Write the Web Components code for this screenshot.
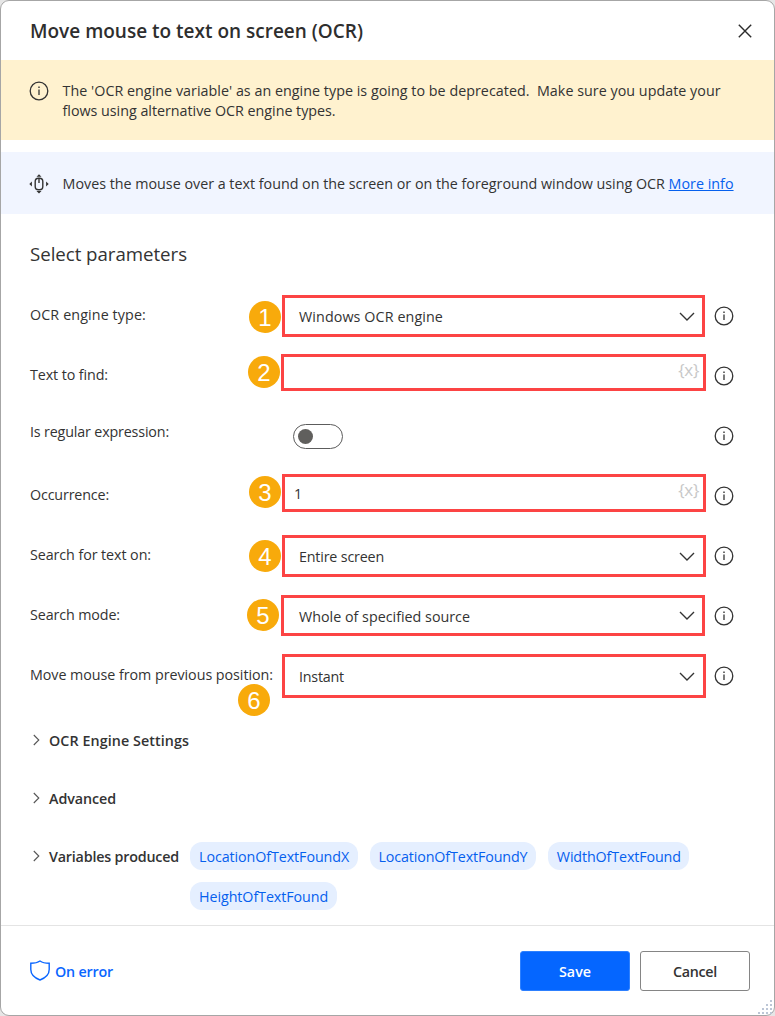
<!DOCTYPE html>
<html lang="en">
<head>
<meta charset="utf-8">
<title>Move mouse to text on screen (OCR)</title>
<style>
html,body{margin:0;height:100%;background:#e6e6e6}
body{font-family:"Open Sans","Noto Sans",sans-serif;font-size:14.3px;color:#333;overflow:hidden}
</style>
</head>
<body>
<action-dialog>
  <ui-text slot="title" w="333">Move mouse to text on screen (OCR)</ui-text>
  <message-bar kind="warning" icon="info">
    <div><ui-text w="658">The 'OCR engine variable' as an engine type is going to be deprecated.&nbsp; Make sure you update your</ui-text></div>
    <div><ui-text w="273">flows using alternative OCR engine types.</ui-text></div>
  </message-bar>
  <message-bar kind="about" icon="mouse"><ui-text w="606">Moves the mouse over a text found on the screen or on the foreground window using OCR&nbsp;</ui-text><ui-text w="65" style="color:#0560ee;text-decoration:underline">More info</ui-text></message-bar>
  <section-title><ui-text w="157">Select parameters</ui-text></section-title>
  <param-row style="--t:10px;--h:42px;--l:0px;--r:1px;--bx:249px;--by:15.500px" kind="select" n="1"><ui-text slot="label" w="116">OCR engine type:</ui-text><ui-text w="144">Windows OCR engine</ui-text></param-row>
  <param-row style="--t:9px;--h:37px;--l:-1px;--r:0px;--bx:248px;--by:10.500px" kind="input" n="2"><ui-text slot="label" w="78">Text to find:</ui-text></param-row>
  <param-row style="--ly:-3px" kind="toggle"><ui-text slot="label" w="139">Is regular expression:</ui-text></param-row>
  <param-row style="--t:9px;--h:38px;--l:0px;--r:0px;--bx:249px;--by:10.500px" kind="input" n="3"><ui-text slot="label" w="79">Occurrence:</ui-text>1</param-row>
  <param-row style="--t:10px;--h:42px;--l:0px;--r:0px;--bx:249px;--by:14.500px" kind="select" n="4"><ui-text slot="label" w="121">Search for text on:</ui-text><ui-text w="85">Entire screen</ui-text></param-row>
  <param-row style="--t:10px;--h:41px;--l:-1px;--r:1px;--bx:247px;--by:13.500px" kind="select" n="5"><ui-text slot="label" w="90">Search mode:</ui-text><ui-text w="171">Whole of specified source</ui-text></param-row>
  <param-row style="--t:9px;--h:44px;--l:0px;--r:0px;--bx:238px;--by:38.500px" kind="select" n="6"><ui-text slot="label" w="243">Move mouse from previous position:</ui-text><ui-text w="45">Instant</ui-text></param-row>
  <expander-row style="margin-top:7px"><ui-text slot="label" w="140">OCR Engine Settings</ui-text></expander-row>
  <expander-row><ui-text slot="label" w="67">Advanced</ui-text></expander-row>
  <expander-row><ui-text slot="label" w="130">Variables produced</ui-text>
    <variable-chip><ui-text w="150">LocationOfTextFoundX</ui-text></variable-chip>
    <variable-chip><ui-text w="149">LocationOfTextFoundY</ui-text></variable-chip>
    <variable-chip><ui-text w="124">WidthOfTextFound</ui-text></variable-chip>
    <variable-chip><ui-text w="129">HeightOfTextFound</ui-text></variable-chip>
  </expander-row>
  <ui-text slot="error" w="58">On error</ui-text>
  <ui-button slot="actions" primary><ui-text w="32">Save</ui-text></ui-button>
  <ui-button slot="actions"><ui-text w="44">Cancel</ui-text></ui-button>
</action-dialog>
<script>
const ICONS = {
  info: `<svg width="20" height="20" viewBox="0 0 20 20" fill="none" stroke="#333" stroke-width="1.3"><circle cx="10" cy="10" r="8.8"/><path d="M10 8.4V14"/><path d="M10 5.6V7" stroke-width="1.4"/></svg>`,
  mouse: `<svg width="20" height="20" viewBox="0 0 20 20" fill="#333"><rect x="6.2" y="4.3" width="7.6" height="11.4" rx="3.2" fill="none" stroke="#333" stroke-width="1.4"/><path d="M9.3 4h1.4v5H9.3zM10 .2l2.500 2.600h-5zM10 19.500l2.500-2.600h-5zM.3 10l2.600-2.400v4.800zM19.700 10l-2.600-2.400v4.800z"/></svg>`,
  close: `<svg width="14" height="14" viewBox="0 0 14 14" fill="none" stroke="#2b2b2b" stroke-width="1.4"><path d="M.8.8l12.4 12.4M13.2.8.8 13.2"/></svg>`,
  down: `<svg width="16" height="10" viewBox="0 0 16 10" fill="none" stroke="#333" stroke-width="1.35"><path d="M1 1l7 7 7-7"/></svg>`,
  right: `<svg width="7" height="12" viewBox="0 0 7 12" fill="none" stroke="#555" stroke-width="1.1"><path d="M.8 1l5 5-5 5"/></svg>`,
  shield: `<svg width="20" height="21" viewBox="0 0 20 21" fill="none" stroke="#0a66ff" stroke-width="1.4"><path d="M10 1C7.6 2.7 4.5 3.3.8 3.3V9.5C.8 14.5 4.8 18 10 20 15.2 18 19.2 14.5 19.2 9.5V3.3C15.5 3.3 12.4 2.7 10 1Z"/></svg>`
};

class Base extends HTMLElement {
  connectedCallback() {
    if (!this.shadowRoot) this.attachShadow({mode: 'open'}).innerHTML = this.render();
  }
}

/* One line of text whose tracking is tuned so that it spans the width in "w". */
customElements.define('ui-text', class extends Base {
  render() { return `<style>:host{display:inline-block;white-space:nowrap}</style><slot></slot>`; }
  fit() {
    this.style.letterSpacing = '0px';
    const n = this.textContent.length;
    const gap = (+this.getAttribute('w') - this.getBoundingClientRect().width) / n;
    this.style.letterSpacing = gap.toFixed(3) + 'px';
  }
});

customElements.define('action-dialog', class extends Base {
  render() { return `<style>
    :host{display:flex;flex-direction:column;box-sizing:border-box;width:775px;height:1016px;border:1px solid #a6a6a6;border-radius:9px;background:#fff;position:relative}
    header{height:59px;display:flex;align-items:center;justify-content:space-between;padding:0 22px 0 29px;font-size:19px;font-weight:600;box-sizing:border-box;color:#2e2e2e}
    header svg{display:block}
    main{flex:1}
    footer{height:90px;border-top:1px solid #e4e4e4;box-sizing:border-box;display:flex;align-items:center;padding:0 24px 0 29px;gap:10px}
    .err{margin-right:auto;display:flex;align-items:center;gap:5px;color:#0a66ff;font-weight:600}
    .err slot{display:block;padding-top:2px}
    .grip{position:absolute;right:1px;bottom:1px}
    </style>
    <header><slot name="title"></slot>${ICONS.close}</header>
    <main><slot></slot></main>
    <footer><span class="err">${ICONS.shield}<slot name="error"></slot></span><slot name="actions"></slot></footer>
    <svg class="grip" width="15" height="15" viewBox="0 0 15 15" fill="#bcc6d6"><path d="M12 1h2v2h-2zM12 5h2v2h-2zM12 9h2v2h-2zM12 13h2v2h-2zM8 5h2v2h-2zM8 9h2v2h-2zM8 13h2v2h-2zM4 9h2v2h-2zM4 13h2v2h-2zM0 13h2v2h-2z"/></svg>`; }
});

customElements.define('message-bar', class extends Base {
  render() { return `<style>
    :host{display:flex;box-sizing:border-box;padding-left:28.4px;gap:13.2px;line-height:20px}
    :host([kind=warning]){height:80px;background:#fff2cf;padding-top:20.5px;margin-bottom:12px}
    :host([kind=about]){height:62px;background:#f1f5ff;align-items:center;padding-top:1px}
    svg{display:block;flex:none}
    .text{padding-top:.5px}
    </style>${ICONS[this.getAttribute('icon')]}<div class="text"><slot></slot></div>`; }
});

customElements.define('section-title', class extends Base {
  render() { return `<style>:host{display:flex;align-items:center;height:71px;padding:7px 0 0 29px;box-sizing:border-box;font-size:18.7px}</style><slot></slot>`; }
});

customElements.define('param-row', class extends Base {
  render() {
    const kind = this.getAttribute('kind'), n = this.getAttribute('n');
    const end = kind === 'select' ? ICONS.down : '<span class="var">{x}</span>';
    const control = kind === 'toggle' ? '<div class="toggle"></div>'
      : `<div class="field ${kind}"><slot></slot>${end}</div>`;
    return `<style>
    :host{display:grid;grid-template-columns:252px 424px 36px;height:60px;margin-left:29px;position:relative}
    .label{line-height:60px;position:relative;top:var(--ly,0px);white-space:nowrap}
    .field{box-sizing:border-box;border:3px solid #fc4444;height:var(--h);margin:var(--t) var(--r) 0 var(--l);display:flex;align-items:center;justify-content:space-between;background:#fff}
    .select{padding:1px calc(8px + .5px - var(--r)) 0 calc(14px - var(--l))}
    .input{padding:0 4px 0 9px;align-items:flex-start;line-height:33px}
    .field svg,.var{margin-left:auto}
    .var{color:#c8c8c8;font-size:17px;letter-spacing:-.3px;line-height:26px}
    .toggle{box-sizing:border-box;width:50px;height:25px;border:1.4px solid #5c5c5c;border-radius:13px;margin:19px 0 0 11px;display:flex;align-items:center;padding-left:4px}
    .toggle::before{content:"";width:15px;height:15px;border-radius:50%;background:#605f5d}
    .info{display:flex;align-items:center;justify-content:center;padding-top:1px;box-sizing:border-box}
    .badge{position:absolute;left:calc(var(--bx) - 30.2px);top:var(--by);width:32.5px;height:32.5px;border-radius:50%;background:#f8aa0b;color:#fff;font:24px/34px "Liberation Sans",Arial,sans-serif;text-align:center}
    </style><span class="label"><slot name="label"></slot></span>${control}<span class="info">${ICONS.info}</span>${n ? `<span class="badge">${n}</span>` : ''}`;
  }
});

customElements.define('expander-row', class extends Base {
  render() { return `<style>
    :host{display:flex;min-height:58px;padding-left:32px;box-sizing:border-box}
    .head{display:flex;align-items:center;height:56px;gap:9px;font-weight:600;width:157.4px;white-space:nowrap}
    .body{display:flex;flex-wrap:wrap;gap:12px;padding-top:14px;width:530px;align-content:flex-start}
    </style><div class="head">${ICONS.right}<slot name="label"></slot></div><div class="body"><slot></slot></div>`; }
});

customElements.define('variable-chip', class extends Base {
  render() { return `<style>:host{display:block;box-sizing:border-box;height:28px;line-height:28px;padding:1px 8.7px 0;border-radius:12px;background:#e5efff;color:#0560ee}</style><slot></slot>`; }
});

customElements.define('ui-button', class extends Base {
  render() { return `<style>
    :host{display:flex;align-items:center;justify-content:center;width:110px;height:40px;padding-top:2px;box-sizing:border-box;border:1px solid #858585;border-radius:3px;font-weight:600;color:#333}
    :host([primary]){background:#0566ff;border-color:#2d80ff;color:#fff}
    </style><slot></slot>`; }
});

document.querySelectorAll('ui-text').forEach(t => t.fit());
</script>
</body>
</html>
